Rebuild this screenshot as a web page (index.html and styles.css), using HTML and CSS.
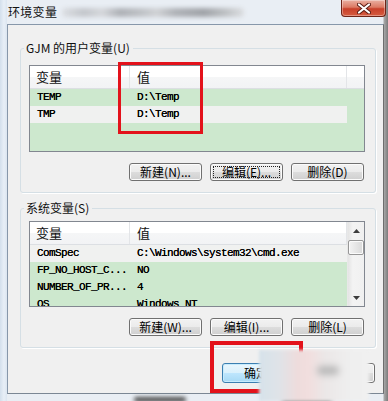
FILE: index.html
```html
<!DOCTYPE html>
<html lang="zh-CN">
<head>
<meta charset="utf-8">
<title>环境变量</title>
<link rel="stylesheet" href="styles.css">
</head>
<body>
<div class="window">
  <div class="titlebar">
    <span class="title">环境变量</span>
    <span class="title-blur"></span>
    <div class="close">
      <svg width="14" height="11" viewBox="0 0 14 11">
        <path d="M2 1.5 L12 9.5 M12 1.5 L2 9.5" stroke="#5a1b12" stroke-width="4" stroke-linecap="round"/>
        <path d="M2 1.5 L12 9.5 M12 1.5 L2 9.5" stroke="#ffffff" stroke-width="2.2" stroke-linecap="round"/>
      </svg>
    </div>
  </div>

  <div class="client">
    <div class="group g1">
      <span class="group-label">GJM 的用户变量(U)</span>
      <div class="listview lv1">
        <div class="lv-main">
          <div class="lv-head">
            <div class="hcell c1">变量</div>
            <div class="hcell c2">值</div>
            <div class="hcell c3"></div>
          </div>
          <div class="row"><div class="cell c1">TEMP</div><div class="cell c2">D:\Temp</div></div>
          <div class="row sel"><div class="cell c1">TMP</div><div class="cell c2">D:\Temp</div></div>
        </div>
      </div>
      <div class="btnrow">
        <div class="btn">新建(N)...</div>
        <div class="btn focus">编辑(E)...</div>
        <div class="btn">删除(D)</div>
      </div>
    </div>

    <div class="group g2">
      <span class="group-label">系统变量(S)</span>
      <div class="listview lv2">
        <div class="lv-main">
          <div class="lv-head">
            <div class="hcell c1">变量</div>
            <div class="hcell c2">值</div>
          </div>
          <div class="row sel"><div class="cell c1">ComSpec</div><div class="cell c2">C:\Windows\system32\cmd.exe</div></div>
          <div class="row"><div class="cell c1">FP_NO_HOST_C...</div><div class="cell c2">NO</div></div>
          <div class="row"><div class="cell c1">NUMBER_OF_PR...</div><div class="cell c2">4</div></div>
          <div class="row"><div class="cell c1">OS</div><div class="cell c2">Windows_NT</div></div>
        </div>
        <div class="scrollbar">
          <div class="sb-btn">
            <svg width="7" height="4" viewBox="0 0 7 4"><path d="M0 4 L3.5 0 L7 4 Z" fill="#3c3c3c"/></svg>
          </div>
          <div class="sb-thumb"></div>
          <div class="sb-btn sb-down">
            <svg width="7" height="4" viewBox="0 0 7 4"><path d="M0 0 L7 0 L3.5 4 Z" fill="#3c3c3c"/></svg>
          </div>
        </div>
      </div>
      <div class="btnrow">
        <div class="btn">新建(W)...</div>
        <div class="btn">编辑(I)...</div>
        <div class="btn">删除(L)</div>
      </div>
    </div>

    <div class="dlg-buttons">
      <div class="btn btn-ok">确定</div>
      <div class="btn btn-cancel">取消</div>
    </div>
  </div>
  <div class="bottom-frame"><span class="streak s1"></span><span class="streak s2"></span></div>

  <div class="redbox rb1"></div>
  <div class="redbox rb2"></div>
  <div class="blur-patch"><span class="blob"></span></div>
</div>
</body>
</html>
```

FILE: styles.css
```css
* { box-sizing: border-box; }
html, body { margin: 0; padding: 0; }
body {
  width: 388px;
  height: 401px;
  overflow: hidden;
  background: #e9eef4;
  font-family: "Noto Sans CJK SC", "Liberation Sans", sans-serif;
  font-size: 12px;
  color: #000;
}

.window {
  position: relative;
  width: 388px;
  height: 401px;
  display: flex;
  flex-direction: column;
  background: linear-gradient(to right, #d3dfec 0, #e8eff7 4px, #dbe5f0 7px, #e9eef4 7px, #e9eef4 383px, #a8a8a8 384px, #7c7c7c 388px);
}

/* title bar */
.titlebar {
  height: 24px;
  display: flex;
  align-items: flex-start;
  flex: none;
}
.title {
  margin: 5px 0 0 8px;
  line-height: 14px;
  font-size: 12px;
  letter-spacing: 0.3px;
  color: #111;
}
.title-blur {
  margin: 8px 0 0 5px;
  width: 182px;
  height: 9px;
  border-radius: 4px;
  background: linear-gradient(90deg, #dcdfe3 0, #c3c6cb 12%, #d5d7db 22%, #aeb1b6 32%, #c1c4c8 45%, #d0d2d5 52%, #b0b3b8 62%, #a0a3a8 78%, #bec1c4 90%, #dcdee1 100%);
  filter: blur(2px);
}
.close {
  margin-left: auto;
  margin-right: 2px;
  width: 45px;
  height: 17px;
  border: 1px solid #6f2417;
  border-top: none;
  border-radius: 0 0 4px 4px;
  background: linear-gradient(#eab0a2 0, #dc7a64 45%, #c8402a 55%, #d65c40 100%);
  box-shadow: inset 0 0 0 1px rgba(255,255,255,0.35);
  display: flex;
  align-items: center;
  justify-content: center;
}

/* client area */
.client {
  margin-left: 7px;
  width: 377px;
  height: 370px;
  flex: none;
  border: 1px solid #8797aa;
  border-right-color: #6e6e6e;
  border-bottom-color: #7b8794;
  background: #f0f0f0;
  display: flex;
  flex-direction: column;
}

.group {
  position: relative;
  margin-left: 12px;
  width: 356px;
  border: 1px solid #d5dfe5;
  border-radius: 3px;
  box-shadow: 1px 1px 0 #fff;
  flex: none;
}
.g1 { margin-top: 23px; height: 145px; }
.g2 { margin-top: 15px; height: 140px; }

.group-label {
  position: absolute;
  top: -8px;
  left: 3px;
  padding: 0 3px 0 2px;
  background: #f0f0f0;
  line-height: 14px;
  font-size: 12px;
  color: #111;
}

/* list views */
.listview {
  margin: 16px 0 0 8px;
  width: 336px;
  border: 1px solid #828790;
  background: #cde8ce;
  display: flex;
  overflow: hidden;
}
.lv1 { height: 87px; }
.lv2 { margin-top: 12px; height: 86px; }
.lv-main { flex: 1; min-width: 0; }

.lv-head {
  display: flex;
  height: 23px;
  border-bottom: 1px solid #dcdfe3;
  background: linear-gradient(#ffffff 0, #ffffff 48%, #f5f6f7 52%, #f2f3f5 100%);
}
.hcell {
  line-height: 22px;
  font-size: 13px;
  color: #111;
  border-right: 1px solid #e3e5e8;
}
.c1 { width: 100px; padding-left: 6px; flex: none; }
.c2 { width: 217px; padding-left: 7px; flex: none; }
.c3 { flex: 1; border-right: none; }

.row {
  display: flex;
  width: 317px;
  height: 17px;
  line-height: 17px;
  font-family: "Liberation Mono", monospace;
  font-size: 11px;
  letter-spacing: -0.6px;
  color: #000;
  white-space: nowrap;
  text-shadow: 0 0 0.4px #000;
}
.row .c1 { padding-left: 7px; }
.row.sel { background: #f0f1f0; }

.scrollbar {
  width: 17px;
  flex: none;
  display: flex;
  flex-direction: column;
  background: linear-gradient(90deg, #e4e4e4 0, #f3f3f3 30%, #f0f0f0 100%);
  border-left: 1px solid #e8e8e8;
}
.sb-btn {
  height: 17px;
  display: flex;
  align-items: center;
  justify-content: center;
  flex: none;
}
.sb-thumb {
  margin: 1px 0 0 0;
  height: 15px;
  border: 1px solid #979797;
  border-radius: 2px;
  background: linear-gradient(90deg, #f3f3f3 0, #e6e6e6 50%, #d9d9d9 100%);
  box-shadow: inset 0 0 0 1px #fbfbfb;
}
.sb-down { margin-top: auto; }

/* buttons */
.btnrow {
  margin-top: 11px;
  height: 18px;
  display: flex;
  justify-content: flex-end;
  gap: 8px;
  padding-right: 11px;
}
.btn {
  width: 73px;
  height: 18px;
  border: 1px solid #707070;
  border-radius: 3px;
  background: linear-gradient(#f2f2f2 0, #ebebeb 50%, #dddddd 50%, #cfcfcf 100%);
  box-shadow: inset 0 0 0 1px #fbfbfb;
  font-size: 12px;
  line-height: 16px;
  text-align: center;
  color: #000;
  white-space: nowrap;
}
.btn.focus {
  outline: 1px dotted #222;
  outline-offset: -4px;
}

.dlg-buttons {
  margin-top: 15px;
  display: flex;
  justify-content: flex-end;
  gap: 3px;
  padding-right: 8px;
}
.btn-ok, .btn-cancel {
  width: 75px;
  height: 20px;
  line-height: 18px;
}
.btn-ok {
  border-color: #3c7fb1;
  background: linear-gradient(#eaf6fd 0, #d9f0fc 50%, #bee6fd 50%, #a7d9f5 100%);
  box-shadow: inset 0 0 0 1px #c7ebfd;
  text-align: left;
  padding-left: 21px;
}

/* bottom frame */
.bottom-frame {
  position: relative;
  height: 7px;
  flex: none;
}
.streak {
  position: absolute;
  top: 3px;
  height: 5px;
  background: #4a4a4a;
  filter: blur(2px);
  border-radius: 3px;
}
.s1 { left: 134px; width: 52px; }
.s2 { left: 282px; width: 50px; background: #6a6a6a; }

/* annotations */
.redbox {
  position: absolute;
  border: 3px solid #e3121b;
}
.rb1 { left: 118px; top: 62px; width: 85px; height: 72px; }
.rb2 { left: 210px; top: 341px; width: 93px; height: 52px; border-width: 4px; }

.blur-patch {
  position: absolute;
  left: 259px;
  top: 350px;
  width: 110px;
  height: 51px;
  background: linear-gradient(90deg, #d6e2ea 0, #dfe3e8 18%, #eedcdc 35%, #f1dede 45%, #ebe7e7 60%, #eeeeee 80%, #f0f0f0 100%);
  filter: blur(1.5px);
}
.blob {
  position: absolute;
  left: 58px;
  top: 16px;
  width: 22px;
  height: 9px;
  border-radius: 5px;
  background: #b8b8b8;
  filter: blur(3px);
}
```
